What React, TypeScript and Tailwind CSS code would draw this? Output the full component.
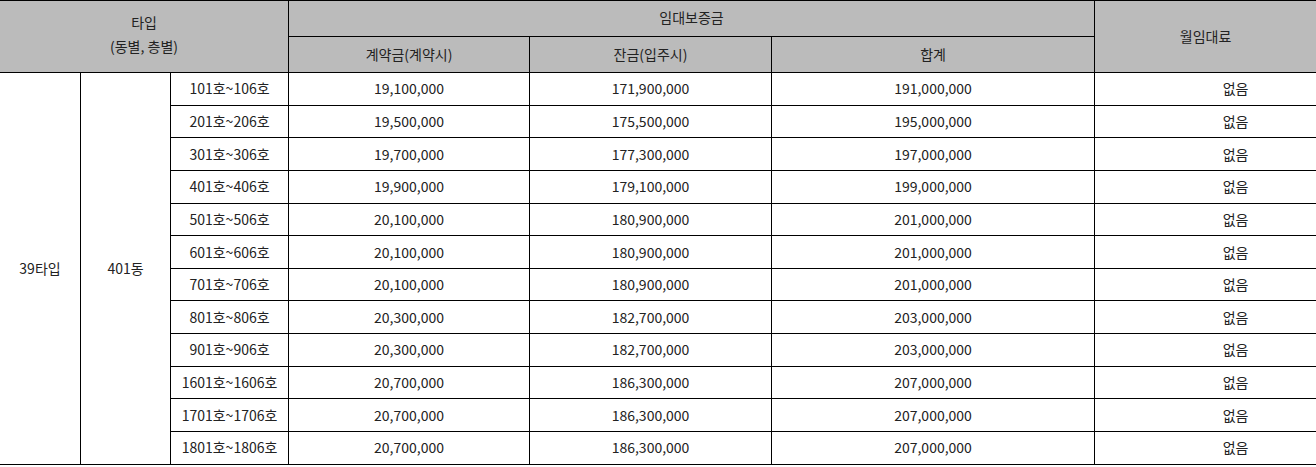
const rows = [
  ['101호~106호', '19,100,000', '171,900,000', '191,000,000'],
  ['201호~206호', '19,500,000', '175,500,000', '195,000,000'],
  ['301호~306호', '19,700,000', '177,300,000', '197,000,000'],
  ['401호~406호', '19,900,000', '179,100,000', '199,000,000'],
  ['501호~506호', '20,100,000', '180,900,000', '201,000,000'],
  ['601호~606호', '20,100,000', '180,900,000', '201,000,000'],
  ['701호~706호', '20,100,000', '180,900,000', '201,000,000'],
  ['801호~806호', '20,300,000', '182,700,000', '203,000,000'],
  ['901호~906호', '20,300,000', '182,700,000', '203,000,000'],
  ['1601호~1606호', '20,700,000', '186,300,000', '207,000,000'],
  ['1701호~1706호', '20,700,000', '186,300,000', '207,000,000'],
  ['1801호~1806호', '20,700,000', '186,300,000', '207,000,000'],
];

const cell = 'border border-black text-center align-middle font-normal';

export default function App() {
  return (
    <div
      className="w-[1316px] h-[467px] bg-white text-[#222] text-[14px] overflow-hidden"
      style={{ fontFamily: '"Noto Sans CJK KR", "Noto Sans", sans-serif' }}
    >
      <table className="w-[1318px] -ml-px border-collapse table-fixed">
        <colgroup>
          <col className="w-[81px]" />
          <col className="w-[90px]" />
          <col className="w-[118px]" />
          <col className="w-[241px]" />
          <col className="w-[242px]" />
          <col className="w-[323px]" />
          <col />
        </colgroup>
        <thead className="bg-[#bbbbbb]">
          <tr className="h-[36px]">
            <th rowSpan={2} colSpan={3} className={`${cell} leading-[24px] pb-[6px]`}>
              타입
              <br />
              (동별, 층별)
            </th>
            <th colSpan={3} className={`${cell} pb-[2px]`}>
              임대보증금
            </th>
            <th rowSpan={2} className={cell}>
              월임대료
            </th>
          </tr>
          <tr className="h-[36px]">
            <th className={cell}>계약금(계약시)</th>
            <th className={cell}>잔금(입주시)</th>
            <th className={cell}>합계</th>
          </tr>
        </thead>
        <tbody>
          {rows.map((r, i) => (
            <tr key={r[0]} className="h-[32.65px]">
              {i === 0 && (
                <>
                  <td rowSpan={rows.length} className={cell}>
                    39타입
                  </td>
                  <td rowSpan={rows.length} className={cell}>
                    401동
                  </td>
                </>
              )}
              <td className={cell}>{r[0]}</td>
              <td className={cell}>{r[1]}</td>
              <td className={cell}>{r[2]}</td>
              <td className={cell}>{r[3]}</td>
              <td className={`${cell} pl-[60px]`}>없음</td>
            </tr>
          ))}
        </tbody>
      </table>
    </div>
  );
}
